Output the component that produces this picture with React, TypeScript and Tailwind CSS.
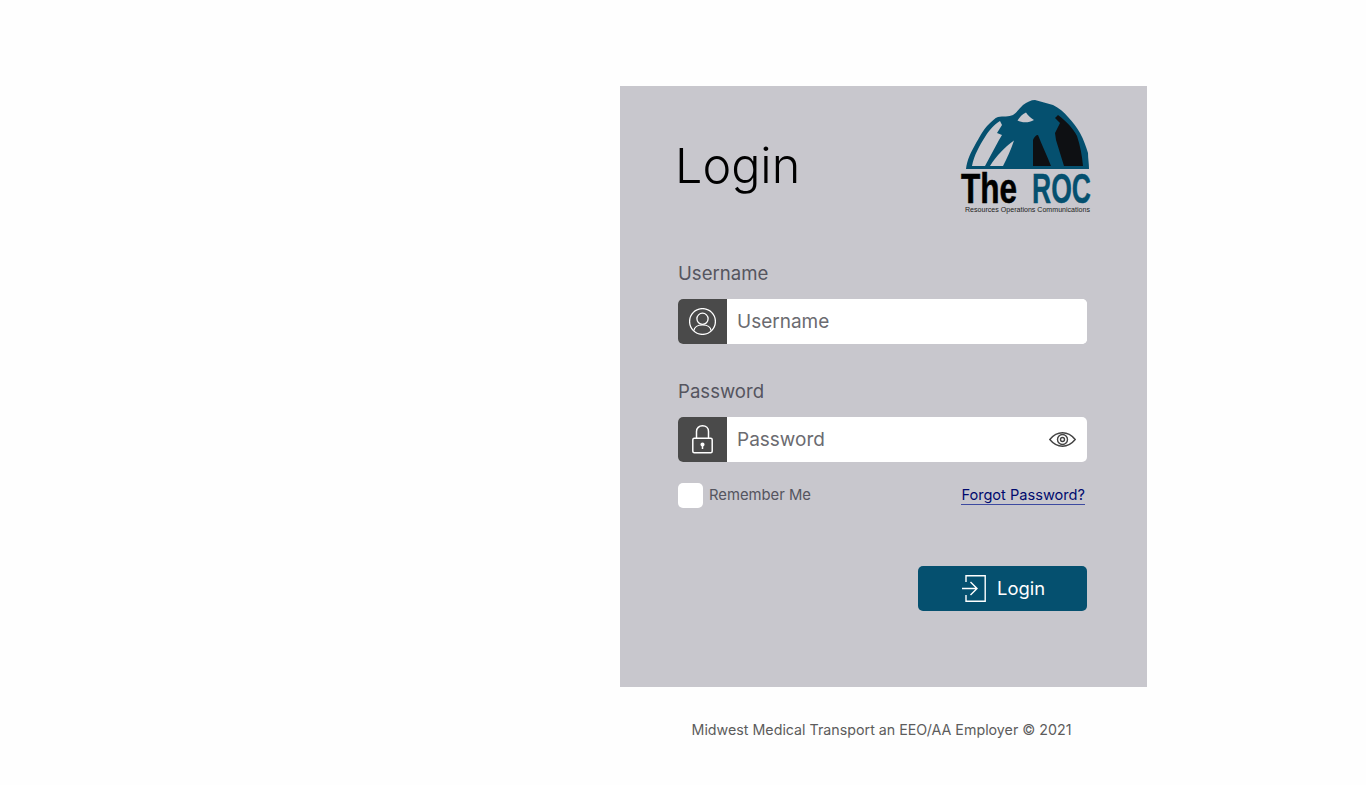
const font = { fontFamily: 'Inter, sans-serif' };

const Logo = () => (
  <svg viewBox="960 98 132 116" className="w-[132px] h-[116px] block">
    <path d="M966 169 C967 160 971 152 975 145 C979 138 983 130 988 125 C992 121 995 118 998 117 C1003 116 1009 117 1013 115 C1017 112 1020 108 1023 105 C1027 102 1031 100 1035 100 C1041 102 1047 103 1053 105 C1059 108 1064 112 1068 117 C1073 122 1077 128 1080 133 C1084 140 1086 147 1088 153 C1088 158 1089 164 1089 169 Z" fill="#05506f" />
    <path d="M972 166 C974 155 980 145 985 137 C989 130 995 124 1000 121 L1002 125 L997 133 L1002 135 L999 140 L985 166 Z" fill="#c8c7cd" />
    <path d="M990 166 C996 156 1005 147 1014 140.5 C1011 150 1007 158 1003 166 Z" fill="#c8c7cd" />
    <path d="M1017.5 120.5 C1020 117 1022 114 1026 112.5 C1028 116 1031 118 1034 120 C1029 123 1022 123 1017.5 120.5 Z" fill="#c8c7cd" />
    <path d="M1033 166 L1033 140 C1034 137 1036 135 1038 135 C1042 145 1047 156 1051 166 Z" fill="#0e1013" />
    <path d="M1055 118 L1058 115 C1066 121 1073 128 1077 136 C1080 145 1082 155 1083 166 L1064 166 L1056 140 L1055 133 L1060 123 Z" fill="#0e1013" />
    <text x="961" y="203" fontFamily="Liberation Sans, sans-serif" fontWeight="700" fontSize="43" textLength="56" lengthAdjust="spacingAndGlyphs" stroke="#000" strokeWidth="0.6">The</text>
    <text x="1032" y="203" fontFamily="Liberation Sans, sans-serif" fontWeight="700" fontSize="43" textLength="59" lengthAdjust="spacingAndGlyphs" fill="#05506f" stroke="#05506f" strokeWidth="0.4">ROC</text>
    <text x="965" y="212" fontFamily="Liberation Sans, sans-serif" fontSize="6.5" textLength="125" lengthAdjust="spacingAndGlyphs" fill="#222">Resources Operations Communications</text>
  </svg>
);

const UserIcon = () => (
  <svg viewBox="0 0 27 27" className="w-[27px] h-[27px]" fill="none" stroke="#fff" strokeWidth="1.3">
    <circle cx="13.5" cy="13.5" r="12.9" />
    <circle cx="13.5" cy="10.8" r="5.6" />
    <path d="M4.8 22.8 C5.2 19.2 8.8 16.8 13.5 16.8 C18.2 16.8 21.8 19.2 22.2 22.8" />
  </svg>
);

const LockIcon = () => (
  <svg viewBox="0 0 21 29" className="w-[21px] h-[29px]" fill="none" stroke="#fff" strokeWidth="1.5">
    <rect x="0.8" y="13.2" width="19.4" height="14.6" rx="1.5" />
    <path d="M4.5 13 V6.5 C4.5 3 7 0.8 10.5 0.8 C14 0.8 16.5 3 16.5 6.5 V13" />
    <circle cx="10.5" cy="19.5" r="1.3" fill="#fff" />
    <path d="M10.5 20 V24" />
  </svg>
);

const EyeIcon = () => (
  <svg viewBox="0 0 27 15" className="w-[27px] h-[15px]" fill="none" stroke="#444" strokeWidth="1.4">
    <path d="M0.8 7.5 C4.5 3 8.5 0.8 13.5 0.8 C18.5 0.8 22.5 3 26.2 7.5 C22.5 12 18.5 14.2 13.5 14.2 C8.5 14.2 4.5 12 0.8 7.5 Z" />
    <circle cx="13.5" cy="7.5" r="5" />
    <circle cx="13.5" cy="7.5" r="2" />
  </svg>
);

const LoginIcon = () => (
  <svg viewBox="0 0 24 27" className="w-[24px] h-[27px]" fill="none" stroke="#fff" strokeWidth="1.4">
    <path d="M4 7 V0.8 H23.2 V26.2 H4 V20" />
    <path d="M0 13.5 H14.5 M8.5 7 L15 13.5 L8.5 20" />
  </svg>
);

const Field = ({ label, icon, right, mt }: any) => (
  <div className={mt}>
    <div className="text-[18.6px] leading-[28px] h-[28px] text-[#55555f]">{label}</div>
    <div className="flex h-[45px] mt-[12px] w-[409px] rounded-[5px] overflow-hidden bg-white">
      <div className="w-[49px] bg-[#4a4a4a] flex items-center justify-center">{icon}</div>
      <input
        placeholder={label}
        style={font}
        className="flex-1 min-w-0 pl-[10px] pt-[2px] text-[19px] text-[#333] placeholder:text-[#6b6b70] outline-none bg-white"
      />
      {right && <div className="flex items-center pr-[11px]">{right}</div>}
    </div>
  </div>
);

export default function App() {
  return (
    <div className="min-h-[785px] bg-[#fefefe] pl-[620px] pt-[86px]" style={font}>
      <div className="w-[527px] h-[601px] bg-[#c8c7cd] pl-[58px] pr-[60px]">
        <div className="flex justify-between items-start h-[173px] pt-[12px] -mr-[5px]">
          <h1 className="text-[48.5px] leading-[60px] font-light text-black -ml-[3px] mt-[38px]">Login</h1>
          <Logo />
        </div>
        <Field label="Username" icon={<UserIcon />} />
        <Field label="Password" icon={<LockIcon />} right={<EyeIcon />} mt="mt-[33px]" />
        <div className="flex justify-between items-center mt-[21px]">
          <label className="flex items-center gap-[6px] text-[14.8px] text-[#55555f]">
            <span className="w-[25px] h-[25px] rounded-[5px] bg-white" />
            Remember Me
          </label>
          <a href="#" className="text-[14.6px] leading-[18px] text-[#000a6e] border-b border-[#3d4aa0] mr-[2px]">Forgot Password?</a>
        </div>
        <div className="flex justify-end mt-[58px]">
          <button className="w-[169px] h-[45px] rounded-[5px] bg-[#05506f] text-white text-[18.4px] flex items-center justify-start pl-[44px] gap-[11px]">
            <LoginIcon />
            Login
          </button>
        </div>
      </div>
      <div className="w-[523px] mt-[33px] text-center text-[14.25px] leading-[20px] text-[#5c5c5c]">Midwest Medical Transport an EEO/AA Employer © 2021</div>
    </div>
  );
}
